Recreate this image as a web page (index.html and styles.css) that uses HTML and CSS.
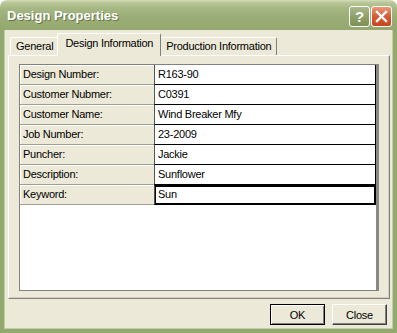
FILE: index.html
```html
<!DOCTYPE html>
<html lang="en">
<head>
  <meta charset="UTF-8" />
  <title>Design Properties</title>
  <link rel="stylesheet" href="styles.css">
</head>
<body>
  <div class="window">
    <div class="titlebar">
      <span class="title">Design Properties</span>
      <div class="caption-btns">
        <button class="cap help" title="Help">?</button>
        <button class="cap close" title="Close">
          <svg width="13" height="13" viewBox="0 0 13 13">
            <path d="M2 2 L11 11 M11 2 L2 11" stroke="#fff" stroke-width="2.4" stroke-linecap="square" />
          </svg>
        </button>
      </div>
    </div>

    <div class="frame">
      <div class="tabs">
        <div class="tab">General</div>
        <div class="tab active">Design Information</div>
        <div class="tab">Production Information</div>
      </div>

      <div class="panel">
        <div class="props">
          <div class="row"><div class="label">Design Number:</div><div class="value">R163-90</div></div>
          <div class="row"><div class="label">Customer Nubmer:</div><div class="value">C0391</div></div>
          <div class="row"><div class="label">Customer Name:</div><div class="value">Wind Breaker Mfy</div></div>
          <div class="row"><div class="label">Job Number:</div><div class="value">23-2009</div></div>
          <div class="row"><div class="label">Puncher:</div><div class="value">Jackie</div></div>
          <div class="row"><div class="label">Description:</div><div class="value">Sunflower</div></div>
          <div class="row"><div class="label">Keyword:</div><div class="value selected">Sun</div></div>
        </div>
      </div>

      <div class="actions">
        <button class="btn default">OK</button>
        <button class="btn">Close</button>
      </div>
    </div>
  </div>
</body>
</html>
```

FILE: styles.css
```css
* {
  box-sizing: border-box;
}

body {
  margin: 0;
  background: #fff;
  font-family: "Liberation Sans", Arial, sans-serif;
  font-size: 11px;
  letter-spacing: -0.25px;
  color: #000;
}

.window {
  width: 397px;
  height: 333px;
  display: flex;
  flex-direction: column;
}

.titlebar {
  height: 30px;
  flex: none;
  display: flex;
  align-items: center;
  justify-content: space-between;
  padding: 0 5px 0 7px;
  border-radius: 7px 7px 0 0;
  background: linear-gradient(to bottom, #d3dcb8 0, #b7c596 3px, #a5b682 9px, #9aad76 18px, #94a86f 30px);
}

.title {
  color: #fff;
  font-weight: bold;
  font-size: 13px;
  letter-spacing: 0;
  text-shadow: 1px 1px 0 #66774a;
}

.caption-btns {
  display: flex;
  gap: 1px;
  padding-top: 2px;
}

.cap {
  width: 21px;
  height: 21px;
  padding: 0;
  border: 1px solid #fff;
  border-radius: 3px;
  display: flex;
  align-items: center;
  justify-content: center;
}

.help {
  background: linear-gradient(to bottom, #aab889, #8a9d64 60%, #7d9057);
  color: #fff;
  font-family: "Liberation Sans", Arial, sans-serif;
  font-weight: bold;
  font-size: 15px;
}

.close {
  background: linear-gradient(to bottom, #ec9b78, #d65a34 50%, #c8461f);
}

.frame {
  flex: 1;
  display: flex;
  flex-direction: column;
  background: #ece9d8;
  border: 4px solid #92a86f;
  border-top: 0;
  box-shadow: inset 1px 0 0 #c3cfaa, inset -1px 0 0 #c3cfaa, inset 0 -1px 0 #c3cfaa;
  padding: 3px 3px 0 4px;
}

.tabs {
  display: flex;
  align-items: flex-end;
  height: 22px;
  padding-left: 2px;
}

.tab {
  height: 18px;
  line-height: 16px;
  padding: 0 5px;
  background: #ece9d8;
  border: 1px solid;
  border-color: #fff #808080 transparent #fff;
  border-bottom: 0;
  border-radius: 2px 2px 0 0;
}

.tab.active {
  position: relative;
  z-index: 1;
  height: 23px;
  line-height: 19px;
  margin: 0 -1px -1px -2px;
  padding: 0 7px;
}

.panel {
  flex: 1;
  display: flex;
  flex-direction: column;
  border: 1px solid;
  border-color: #fff #808080 #808080 #fff;
  box-shadow: inset -1px -1px 0 #d4d0c0;
  padding: 8px 10px 7px 10px;
}

.props {
  flex: 1;
  background: #fff;
  border: 1px solid #808080;
  border-right: 3px solid #888;
}

.row {
  display: grid;
  grid-template-columns: 134px 222px;
  height: 20px;
}

.label {
  background: #ece9d8;
  border-bottom: 1px solid #a09f94;
  box-shadow: inset 1px 1px 0 #fff;
  padding-left: 3px;
  line-height: 19px;
  white-space: nowrap;
}

.value {
  background: #fff;
  border-left: 1px solid #555;
  border-right: 1px solid #000;
  border-bottom: 1px solid #000;
  padding-left: 3px;
  line-height: 19px;
  white-space: nowrap;
}

.value.selected {
  box-shadow: inset 0 0 0 1px #000;
  border-top: 1px solid #000;
  line-height: 17px;
}

.actions {
  display: flex;
  justify-content: flex-end;
  gap: 7px;
  padding: 5px 3px 4px 0;
}

.btn {
  width: 55px;
  height: 21px;
  padding: 0;
  font: inherit;
  letter-spacing: inherit;
  background: #ece9d8;
  border: 1px solid;
  border-color: #fff #404040 #404040 #fff;
  box-shadow: inset -1px -1px 0 #808080;
}

.btn.default {
  border-color: #000;
  box-shadow: inset 1px 1px 0 #fff, inset -1px -1px 0 #808080;
}
```
